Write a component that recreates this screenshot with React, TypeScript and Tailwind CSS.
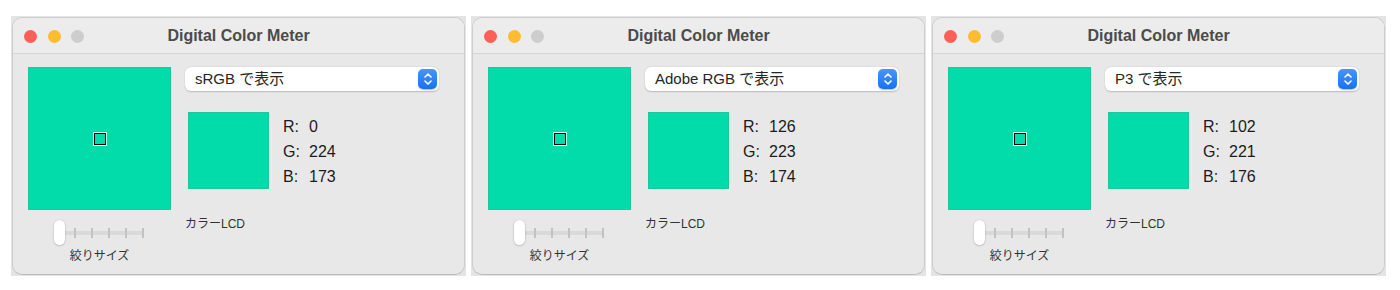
import React from "react";

type Meter = { mode: string; r: string; g: string; b: string };

const meters: Meter[] = [
  { mode: "sRGB で表示", r: "0", g: "224", b: "173" },
  { mode: "Adobe RGB で表示", r: "126", g: "223", b: "174" },
  { mode: "P3 で表示", r: "102", g: "221", b: "176" },
];

const font = {
  fontFamily: '"Liberation Sans", "Noto Sans CJK JP", sans-serif',
};

function Stepper() {
  return (
    <div className="w-[19px] h-[20px] rounded-[5px] bg-gradient-to-b from-[#4596fa] to-[#1671f0] flex items-center justify-center shadow-[0_0.5px_1px_rgba(0,0,0,0.25)]">
      <svg width="10" height="14" viewBox="0 0 10 14" fill="none">
        <path d="M2 5 L5 2 L8 5" stroke="white" strokeWidth="1.6" strokeLinecap="round" strokeLinejoin="round" />
        <path d="M2 9 L5 12 L8 9" stroke="white" strokeWidth="1.6" strokeLinecap="round" strokeLinejoin="round" />
      </svg>
    </div>
  );
}

function Slider() {
  const ticks = [0, 1, 2, 3, 4];
  return (
    <div className="relative w-[92px] h-[25px] flex items-center">
      <div className="ml-[10px] w-[80px] h-[4px] bg-[#d9d9d9] rounded-full relative flex items-center justify-between pl-[10px]">
        {ticks.map((t) => (
          <div key={t} className="w-[2px] h-[10px] bg-[#c2c2c2]" />
        ))}
      </div>
      <div className="absolute left-0 top-0 w-[11px] h-[25px] rounded-[6px] bg-white shadow-[0_0.5px_2px_rgba(0,0,0,0.3)]" />
    </div>
  );
}

function Window({ m }: { m: Meter }) {
  return (
    <div className="w-[455px] h-[260px] bg-[#e4e4e4] p-[1px]">
      <div className="w-full h-full rounded-[10px] border border-[#cdcdcd] border-b-[#bdbdbd] bg-[#e8e8e8] overflow-hidden flex flex-col">
        <div className="h-[36px] shrink-0 bg-[#ececec] border-b border-[#d4d4d4] relative flex items-center">
          <div className="flex items-center gap-[10.5px] pl-[11px] pt-[1px]">
            <div className="w-[13px] h-[13px] rounded-full bg-[#fe5f57]" />
            <div className="w-[13px] h-[13px] rounded-full bg-[#febc2e]" />
            <div className="w-[13px] h-[13px] rounded-full bg-[#cdcdcd]" />
          </div>
          <div className="absolute inset-0 flex items-center justify-center text-[16px] font-bold text-[#4b4b4b]">
            Digital Color Meter
          </div>
        </div>
        <div className="flex pl-[15px] pt-[13px]">
          <div className="w-[143px] flex flex-col items-center">
            <div className="w-[143px] h-[143px] bg-[#02dcab] border border-[#1cc89c] flex items-center justify-center">
              <div className="w-[14px] h-[14px] border border-white/80 flex">
                <div className="flex-1 border-[1.5px] border-black" />
              </div>
            </div>
            <div className="mt-[10px]">
              <Slider />
            </div>
            <div className="mt-[2px] text-[12px] leading-[18px] text-[#333]">絞りサイズ</div>
          </div>
          <div className="ml-[14px] w-[254px] flex flex-col">
            <div className="h-[24px] bg-white rounded-[6px] shadow-[0_0.5px_1.5px_rgba(0,0,0,0.2)] flex items-center justify-between pl-[10px] pr-[2px]">
              <span className="text-[15px] text-[#262626]">{m.mode}</span>
              <Stepper />
            </div>
            <div className="flex mt-[21px] ml-[3px]">
              <div className="w-[81px] h-[77px] bg-[#02dcab] border border-[#1cc89c]" />
              <div className="ml-[14px] mt-[2px] text-[16px] leading-[25px] text-[#1c1c1c]">
                <div className="flex"><span className="w-[26px]">R:</span><span>{m.r}</span></div>
                <div className="flex"><span className="w-[26px]">G:</span><span>{m.g}</span></div>
                <div className="flex"><span className="w-[26px]">B:</span><span>{m.b}</span></div>
              </div>
            </div>
            <div className="mt-[26px] text-[12px] leading-[18px] text-[#333]">カラーLCD</div>
          </div>
        </div>
      </div>
    </div>
  );
}

export default function App() {
  return (
    <div className="w-[1400px] h-[290px] bg-white pt-[16px] pl-[11px] flex gap-[5px]" style={font}>
      {meters.map((m, i) => (
        <Window key={i} m={m} />
      ))}
    </div>
  );
}
